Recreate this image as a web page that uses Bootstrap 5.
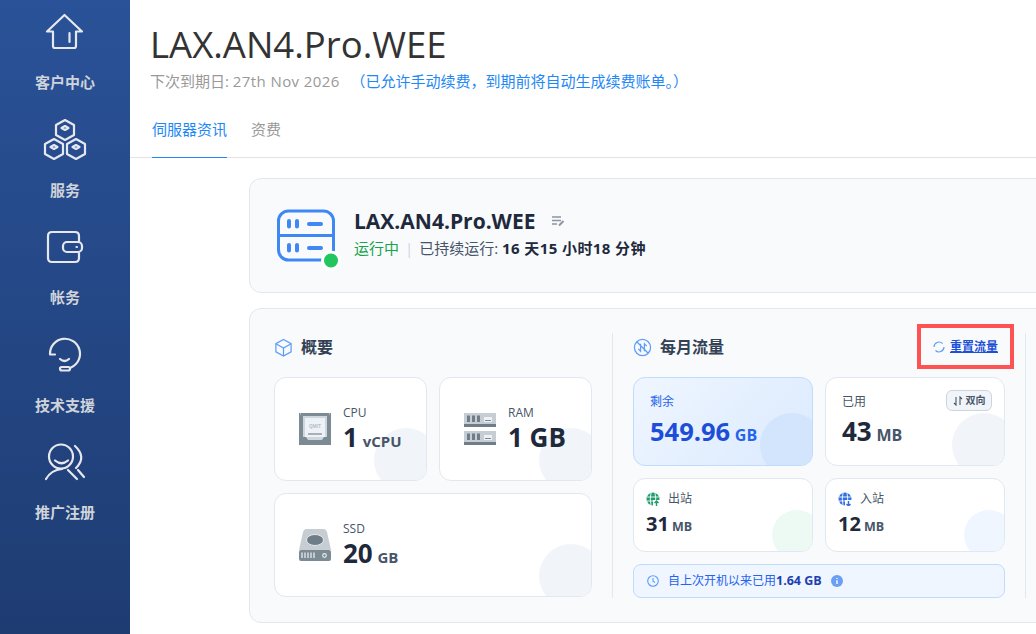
<!DOCTYPE html>
<html lang="zh-CN">
<head>
    <meta charset="UTF-8">
    <meta name="viewport" content="width=device-width, initial-scale=1.0">
    <title>LAX.AN4.Pro.WEE</title>
    <link href="https://cdn.jsdelivr.net/npm/bootstrap@5.3.0/dist/css/bootstrap.min.css" rel="stylesheet">
    <style>
        html, body {
            height: 634px;
            overflow: hidden;
        }

        body {
            background-color: #fff;
            font-family: "Open Sans", "Noto Sans CJK SC", sans-serif;
            color: #333;
        }

        .side-bar {
            width: 130px;
            height: 634px;
            background: linear-gradient(180deg, #2a5298 0%, #1e3c72 100%);
        }

        .side-item {
            height: 107.5px;
            color: #cfd3da;
            font-size: 15px;
            font-weight: 700;
            line-height: 22px;
            text-decoration: none;
        }

        .side-icon {
            display: block;
            width: 60px;
            height: 50px;
            margin-top: 7px;
            margin-bottom: 14px;
        }

        .side-icon * {
            fill: none;
            stroke: #e6e8ee;
            stroke-width: 2.2;
            stroke-linecap: round;
            stroke-linejoin: round;
        }

        .page-head {
            padding: 20px 20px 0;
        }

        .page-title {
            font-size: 36.5px;
            line-height: 48px;
            font-weight: 400;
            color: #333;
            margin: 0;
        }

        .page-sub {
            font-size: 15px;
            line-height: 20px;
            color: #999;
            margin-top: 3px;
        }

        .page-sub .due-date {
            letter-spacing: 0.4px;
        }

        .page-sub .renew-note {
            color: #1e88f5;
            margin-left: 7px;
        }

        .tab-row {
            border-bottom: 1px solid #e3e3e3;
            height: 47px;
            margin-top: 20px;
            padding-left: 22px;
            font-size: 15px;
            gap: 24px;
        }

        .tab-row a {
            color: #999;
            text-decoration: none;
            line-height: 20px;
            height: 47px;
            padding-top: 8px;
        }

        .tab-row a.is-on {
            color: #1e88f5;
            border-bottom: 1px solid #1e88f5;
        }

        .panel-area {
            padding: 20px 0 0 119px;
            width: 1100px;
        }

        .soft-panel {
            background-color: #f8fafc;
            border: 1px solid #e2e8f0;
            border-radius: 12px;
        }

        .vps-panel {
            height: 115px;
            padding: 0 27px;
            gap: 11px;
            margin-bottom: 15px;
        }

        .vps-icon {
            display: block;
            flex-shrink: 0;
        }

        .vps-text {
            padding-bottom: 6px;
        }

        .vps-name {
            font-size: 21px;
            line-height: 26px;
            font-weight: 700;
            color: #1e293b;
        }

        .vps-state {
            font-size: 15px;
            line-height: 20px;
            color: #475569;
            margin-top: 4px;
        }

        .vps-state b {
            color: #1e293b;
            font-weight: 700;
            letter-spacing: 0.4px;
        }

        .state-on {
            color: #16a34a;
        }

        .state-sep {
            color: #cbd5e1;
            margin: 0 6px;
        }

        .spec-panel {
            height: 315px;
            padding: 24px 24px 0;
        }

        .spec-col {
            width: 318px;
            flex-shrink: 0;
        }

        .traffic-col {
            width: 414px;
            flex-shrink: 0;
            margin-left: 20px;
            border-left: 1px solid #e2e8f0;
            border-right: 1px solid #e2e8f0;
            padding: 0 20px;
            height: 265px;
        }

        .col-head {
            height: 28px;
            margin-bottom: 16px;
            font-size: 16px;
            font-weight: 600;
            color: #334155;
            gap: 8px;
            position: relative;
        }

        .stat-grid {
            display: grid;
            grid-template-columns: 1fr 1fr;
            gap: 12px;
        }

        .stat-box {
            position: relative;
            overflow: hidden;
            background-color: #fff;
            border: 1px solid #e2e8f0;
            border-radius: 12px;
        }

        .stat-box::after {
            content: "";
            position: absolute;
            width: 64px;
            height: 64px;
            right: -12px;
            bottom: -12px;
            border-radius: 50%;
            background-color: #f1f5f9;
        }

        .stat-front {
            position: relative;
            z-index: 1;
        }

        .spec-box {
            height: 104px;
            padding: 0 24px;
            gap: 12px;
        }

        .spec-box .stat-value small {
            font-size: 15px;
        }

        .span-two {
            grid-column: span 2;
        }

        .stat-label {
            font-size: 12px;
            line-height: 16px;
            color: #475569;
        }

        .stat-value {
            font-size: 26px;
            line-height: 32px;
            font-weight: 700;
            color: #1e293b;
            white-space: nowrap;
        }

        .stat-value small {
            font-size: 16px;
            line-height: 1;
            font-weight: 700;
            color: #475569;
            margin-left: -2px;
        }

        .reset-link {
            position: relative;
            margin-right: 7px;
            font-size: 12px;
            font-weight: 600;
            color: #1d4ed8;
            text-decoration: underline;
            gap: 5px;
        }

        .mark-box {
            position: absolute;
            left: -16px;
            right: -16px;
            top: -14px;
            bottom: -13px;
            border: 4px solid #ff5353;
        }

        .flow-big {
            height: 89px;
            padding: 16px 16px 0;
        }

        .flow-left {
            background: linear-gradient(135deg, #eff6ff, #dbeafe);
            border-color: #bfdbfe;
        }

        .flow-left::after {
            background-color: #d3e4fd;
        }

        .flow-left .stat-label {
            color: #2563eb;
        }

        .flow-left .stat-value {
            color: #1d4ed8;
            font-size: 25.5px;
            margin-top: 5px;
        }

        .flow-left .stat-value small {
            color: #2563eb;
        }

        .flow-used .stat-value {
            margin-top: 5px;
        }

        .way-tag {
            position: absolute;
            top: 12px;
            right: 12px;
            height: 21px;
            width: 46px;
            background-color: #f1f5f9;
            border: 1px solid #cbd5e1;
            border-radius: 6px;
            font-size: 10px;
            font-weight: 600;
            color: #475569;
            gap: 3px;
        }

        .flow-small {
            height: 74px;
            padding: 12px 12px 0;
        }

        .flow-small::after {
            width: 50px;
            height: 50px;
            right: -10px;
            bottom: -9px;
        }

        .flow-out::after {
            background-color: #ecfaf3;
        }

        .flow-in::after {
            background-color: #eff6ff;
        }

        .flow-small .stat-value {
            font-size: 20px;
            line-height: 26px;
            margin-top: 4px;
        }

        .flow-small .stat-value small {
            font-size: 12.5px;
        }

        .since-note {
            grid-column: span 2;
            height: 34px;
            background-color: #eff6ff;
            border: 1px solid #bfdbfe;
            border-radius: 8px;
            padding: 0 13px;
            gap: 9px;
            font-size: 12px;
            color: #2563eb;
        }

        .since-note b {
            color: #1e40af;
            font-size: 12.5px;
            font-weight: 700;
        }
    </style>
</head>
<body>
    <div class="d-flex">
        <nav class="side-bar flex-shrink-0 d-flex flex-column">
            <a href="#" class="side-item d-flex flex-column align-items-center">
                <svg class="side-icon" viewBox="0 0 60 50"><path d="M29.500 8 L12 24.500 H18 V39 Q18 41 20 41 H39 Q41 41 41 39 V24.500 H47 Z"/><path d="M34.500 26 V35"/></svg>
                <span>客户中心</span>
            </a>
            <a href="#" class="side-item d-flex flex-column align-items-center">
                <svg class="side-icon" viewBox="0 0 60 50"><path d="M30 5 L39 10 V20 L30 25 L21 20 V10 Z"/><path d="M19 24 L28 29 V39 L19 44 L10 39 V29 Z"/><path d="M41 24 L50 29 V39 L41 44 L32 39 V29 Z"/><path d="M26.500 13 L30 11 L33.500 13 L30 15 Z"/><path d="M15.500 32 L19 30 L22.500 32 L19 34 Z"/><path d="M37.500 32 L41 30 L44.500 32 L41 34 Z"/></svg>
                <span>服务</span>
            </a>
            <a href="#" class="side-item d-flex flex-column align-items-center">
                <svg class="side-icon" viewBox="0 0 60 50"><path d="M44 19 V14 Q44 10 40 10 H17 Q13 10 13 14 V36 Q13 40 17 40 H40 Q44 40 44 36 V31"/><rect x="28" y="20" width="19" height="10" rx="4"/><path d="M41.500 25 H42"/></svg>
                <span>帐务</span>
            </a>
            <a href="#" class="side-item d-flex flex-column align-items-center">
                <svg class="side-icon" viewBox="0 0 60 50"><path d="M15 24.500 H20 M15 24 A15 15 0 1 1 36 37.500"/><path d="M25 29 Q29.500 33 34 29"/><rect x="25" y="37" width="10" height="3.500" rx="1.700"/></svg>
                <span>技术支援</span>
            </a>
            <a href="#" class="side-item d-flex flex-column align-items-center">
                <svg class="side-icon" viewBox="0 0 60 50"><circle cx="26" cy="19.500" r="12"/><path d="M20 23.500 Q26.500 29 33 23.500"/><path d="M11 42 Q16 33 27 32"/><path d="M40 9 Q52 20 41 31"/><path d="M33 33 L42 42"/><path d="M43 33 L49 40"/></svg>
                <span>推广注册</span>
            </a>
        </nav>

        <main class="flex-grow-1 overflow-hidden">
            <div class="page-head">
                <h1 class="page-title">LAX.AN4.Pro.WEE</h1>
                <div class="page-sub">下次到期日: <span class="due-date">27th Nov 2026</span> <span class="renew-note">（已允许手动续费，到期前将自动生成续费账单。）</span></div>
            </div>
            <div class="tab-row d-flex">
                <a href="#" class="is-on">伺服器资讯</a>
                <a href="#">资费</a>
            </div>

            <div class="panel-area">
                <section class="soft-panel vps-panel d-flex align-items-center">
                    <svg class="vps-icon" width="66" height="70" viewBox="0 0 66 70"><rect x="1.500" y="10" width="55" height="49" rx="10" fill="none" stroke="#3f87f5" stroke-width="3"/><path d="M1.500 34.500 H56.500" stroke="#3f87f5" stroke-width="3"/><path d="M12 20 V25.500 M20 20 V25.500 M12 44 V49.500 M20 44 V49.500 M32 23 H44 M32 47 H44" stroke="#3f87f5" stroke-width="4" stroke-linecap="round"/><circle cx="54" cy="59.500" r="8.500" fill="#22c55e" stroke="#fff" stroke-width="3"/></svg>
                    <div class="vps-text">
                        <div class="vps-name d-flex align-items-center gap-3">LAX.AN4.Pro.WEE
                            <svg width="14" height="14" viewBox="0 0 14 14"><path d="M1 3 H10 M1 6.500 H10 M1 10 H6" stroke="#8b95a3" stroke-width="1.400"/><path d="M8 11.500 L12.500 7" stroke="#8b95a3" stroke-width="2"/></svg>
                        </div>
                        <div class="vps-state"><span class="state-on">运行中</span><span class="state-sep">|</span>已持续运行: <b>16 天15 小时18 分钟</b></div>
                    </div>
                </section>

                <section class="soft-panel spec-panel d-flex">
                    <div class="spec-col">
                        <div class="col-head d-flex align-items-center">
                            <svg width="19" height="19" viewBox="0 0 20 20" fill="none" stroke="#5f9cf8" stroke-width="1.300"><path d="M10 1.500 L18 6 V14.500 L10 19 L2 14.500 V6 Z"/><path d="M2 6 L10 10.500 L18 6 M10 10.500 V19"/></svg>
                            <span>概要</span>
                        </div>
                        <div class="stat-grid">
                            <div class="stat-box spec-box d-flex align-items-center">
                                <svg class="flex-shrink-0" width="32" height="32" viewBox="0 0 32 32"><rect width="32" height="32" fill="#7c8a94"/><path d="M4 3 H28 V24 H25 L23 27 H9 L7 24 H4 Z" fill="#cfd7de"/><rect x="6" y="5" width="20" height="19" fill="#eef2f8"/><text x="16" y="14.500" font-size="4.500" font-weight="700" text-anchor="middle" fill="#b4bdc5">QMIT</text><rect x="9" y="20" width="14" height="2" fill="#a5b0b9"/><path d="M1 1 H2 M30 1 H31" stroke="#dfe5ea"/></svg>
                                <div class="stat-front">
                                    <div class="stat-label">CPU</div>
                                    <div class="stat-value">1 <small>vCPU</small></div>
                                </div>
                            </div>
                            <div class="stat-box spec-box d-flex align-items-center">
                                <svg class="flex-shrink-0" width="32" height="32" viewBox="0 0 32 32"><rect y="0" width="32" height="11" fill="#c6ced4"/><rect y="11" width="32" height="3" fill="#6f7d88"/><rect y="18" width="32" height="11" fill="#c6ced4"/><rect y="29" width="32" height="3" fill="#6f7d88"/><path d="M4.500 2.500 V9 M9.500 2.500 V9 M14.500 2.500 V9 M4.500 20.500 V27 M9.500 20.500 V27 M14.500 20.500 V27" stroke="#6f7d88" stroke-width="3"/><rect x="20" y="4" width="8" height="5" fill="#eef2f5"/><rect x="20" y="22" width="8" height="5" fill="#eef2f5"/><path d="M21 7.500 H27 M21 25.500 H27" stroke="#7c8a94"/></svg>
                                <div class="stat-front">
                                    <div class="stat-label">RAM</div>
                                    <div class="stat-value">1 GB</div>
                                </div>
                            </div>
                            <div class="stat-box spec-box span-two d-flex align-items-center">
                                <svg class="flex-shrink-0" width="32" height="32" viewBox="0 0 32 32"><path d="M7 0 H25 Q27 0 28 3 L32 21 H0 L4 3 Q5 0 7 0 Z" fill="#c6ced4"/><ellipse cx="16" cy="11" rx="8.500" ry="5.500" fill="#6f7d88" stroke="#e4e9ed"/><rect y="21" width="32" height="11" rx="2" fill="#7c8a94"/><path d="M3 23.500 V29 M6 23.500 V29 M9 23.500 V29 M12 23.500 V29 M15 23.500 V29" stroke="#e6eaee" stroke-width="1.300"/><circle cx="25.500" cy="26.500" r="1.800" fill="none" stroke="#e6eaee" stroke-width="1.200"/></svg>
                                <div class="stat-front">
                                    <div class="stat-label">SSD</div>
                                    <div class="stat-value">20 <small>GB</small></div>
                                </div>
                            </div>
                        </div>
                    </div>

                    <div class="traffic-col">
                        <div class="col-head d-flex align-items-center justify-content-between">
                            <div class="d-flex align-items-center gap-2">
                                <svg width="19" height="19" viewBox="0 0 20 20" fill="none" stroke="#5f9cf8" stroke-width="1.300"><circle cx="10" cy="10" r="8.500"/><path d="M4 4 L16 16 M8 6 V14 L5.500 11.500 M12 14 V6 L14.500 8.500"/></svg>
                                <span>每月流量</span>
                            </div>
                            <a href="#" class="reset-link d-flex align-items-center">
                                <svg width="12" height="12" viewBox="0 0 12 12" fill="none" stroke="#5f9cf8" stroke-width="1.200"><path d="M1 6 A5 5 0 0 1 9.500 2.500 M11 6 A5 5 0 0 1 2.500 9.500"/></svg>
                                重置流量
                                <span class="mark-box"></span>
                            </a>
                        </div>
                        <div class="stat-grid">
                            <div class="stat-box flow-big flow-left">
                                <div class="stat-label">剩余</div>
                                <div class="stat-value stat-front">549.96 <small>GB</small></div>
                            </div>
                            <div class="stat-box flow-big flow-used">
                                <div class="stat-label">已用</div>
                                <div class="stat-value stat-front">43 <small>MB</small></div>
                                <span class="way-tag d-flex align-items-center justify-content-center">
                                    <svg width="10" height="10" viewBox="0 0 10 10" fill="none" stroke="#475569" stroke-width="1.100"><path d="M3 1 V9 L1 7 M7 9 V1 L9 3"/></svg>双向
                                </span>
                            </div>
                            <div class="stat-box flow-small flow-out">
                                <div class="stat-label d-flex align-items-center gap-2">
                                    <svg width="14" height="14" viewBox="0 0 14 14" fill="none"><circle cx="7" cy="7" r="6.500" fill="#1f9d6c"/><path stroke="#fff" stroke-width="0.900" d="M1 5 H13 M1 9 H13 M5 1 Q3.500 7 5 13 M9 1 Q10.500 7 9 13"/><path fill="#fff" d="M7 14 V8 H14 V14 Z"/><path stroke="#1f9d6c" stroke-width="1.400" d="M10.500 14 V9.500 M8.500 11 L10.500 9 L12.500 11"/></svg>
                                    <span>出站</span>
                                </div>
                                <div class="stat-value stat-front">31 <small>MB</small></div>
                            </div>
                            <div class="stat-box flow-small flow-in">
                                <div class="stat-label d-flex align-items-center gap-2">
                                    <svg width="14" height="14" viewBox="0 0 14 14" fill="none"><circle cx="7" cy="7" r="6.500" fill="#2f6fe0"/><path stroke="#fff" stroke-width="0.900" d="M1 5 H13 M1 9 H13 M5 1 Q3.500 7 5 13 M9 1 Q10.500 7 9 13"/><path fill="#fff" d="M7 14 V8 H14 V14 Z"/><path stroke="#2f6fe0" stroke-width="1.400" d="M10.500 9 V13.500 M8.500 12 L10.500 14 L12.500 12"/></svg>
                                    <span>入站</span>
                                </div>
                                <div class="stat-value stat-front">12 <small>MB</small></div>
                            </div>
                            <div class="since-note d-flex align-items-center">
                                <svg width="12" height="12" viewBox="0 0 12 12" fill="none" stroke="#5f9cf8" stroke-width="1.100"><circle cx="6" cy="6" r="5.300"/><path d="M6 3 V6.300 L8 7.500"/></svg>
                                <span>自上次开机以来已用<b>1.64 GB</b></span>
                                <svg width="12" height="12" viewBox="0 0 12 12"><circle cx="6" cy="6" r="6" fill="#6b9ff5"/><path d="M6 5.200 V9 M6 3 V4" stroke="#fff" stroke-width="1.400"/></svg>
                            </div>
                        </div>
                    </div>
                </section>
            </div>
        </main>
    </div>
    <script src="https://cdn.jsdelivr.net/npm/bootstrap@5.3.0/dist/js/bootstrap.bundle.min.js"></script>
</body>
</html>
